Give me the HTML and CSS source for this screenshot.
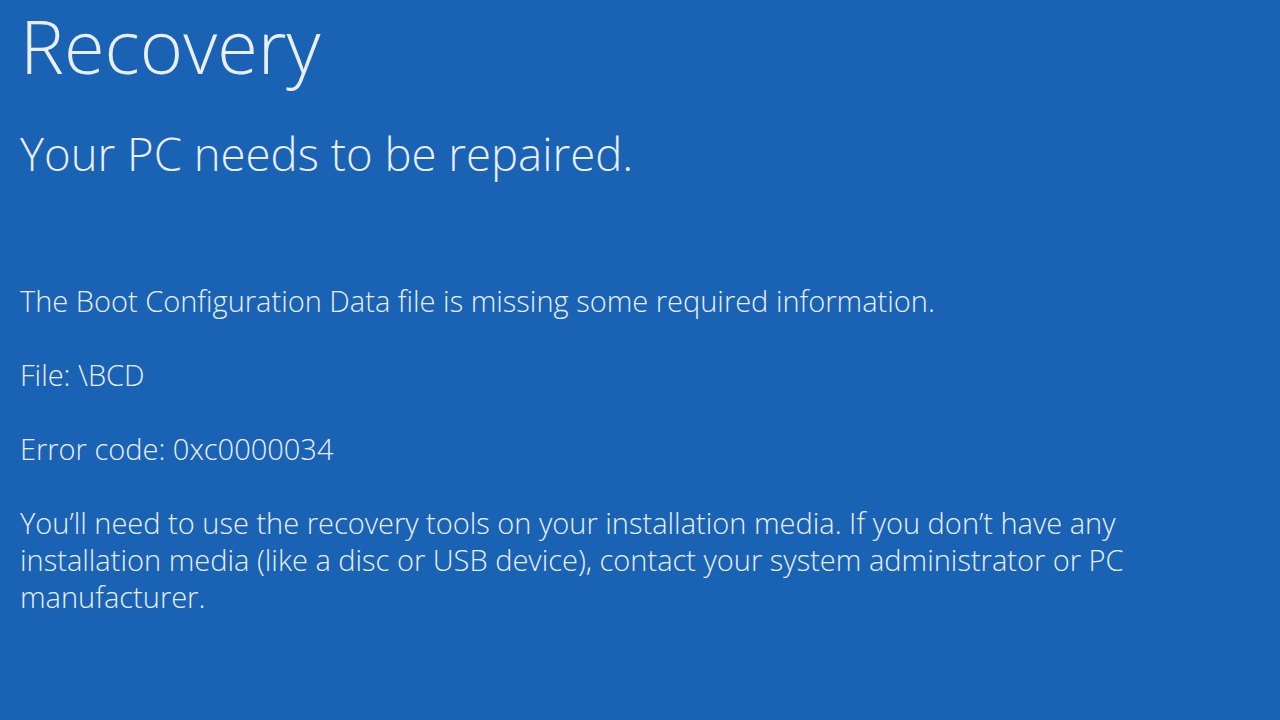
FILE: index.html
```html
<!DOCTYPE html>
<html lang="en">
<head>
    <meta charset="UTF-8"/>
    <title>Recovery</title>
    <link rel="stylesheet" href="styles.css">
</head>
<body>
    <main class="screen">
        <h1 class="title">Recovery</h1>
        <h2 class="subtitle">Your PC needs to be repaired.</h2>
        <div class="details">
            <p>The Boot Configuration Data file is missing some required information.</p>
            <p>File: \BCD</p>
            <p>Error code: 0xc0000034</p>
            <p>You’ll need to use the recovery tools on your installation media. If you don’t have any installation media (like a disc or USB device), contact your system administrator or PC manufacturer.</p>
        </div>
    </main>
</body>
</html>
```

FILE: styles.css
```css
html, body {
    margin: 0;
    height: 100%;
}

body {
    background: #1a63b4;
    color: #e9eff8;
    font-family: "Open Sans", "Noto Sans", sans-serif;
    font-weight: 300;
    overflow: hidden;
}

.screen {
    padding: 0 20px;
    width: 1130px;
}

.title {
    font-size: 74px;
    font-weight: 300;
    line-height: 1.2;
    margin: 2px 0 0;
}

.subtitle {
    font-size: 45.5px;
    font-weight: 300;
    line-height: 1.2;
    margin: 35px 0 0;
}

.details {
    margin-top: 102px;
}

.details p {
    font-size: 29px;
    line-height: 37px;
    margin: 0 0 37px;
}
```
